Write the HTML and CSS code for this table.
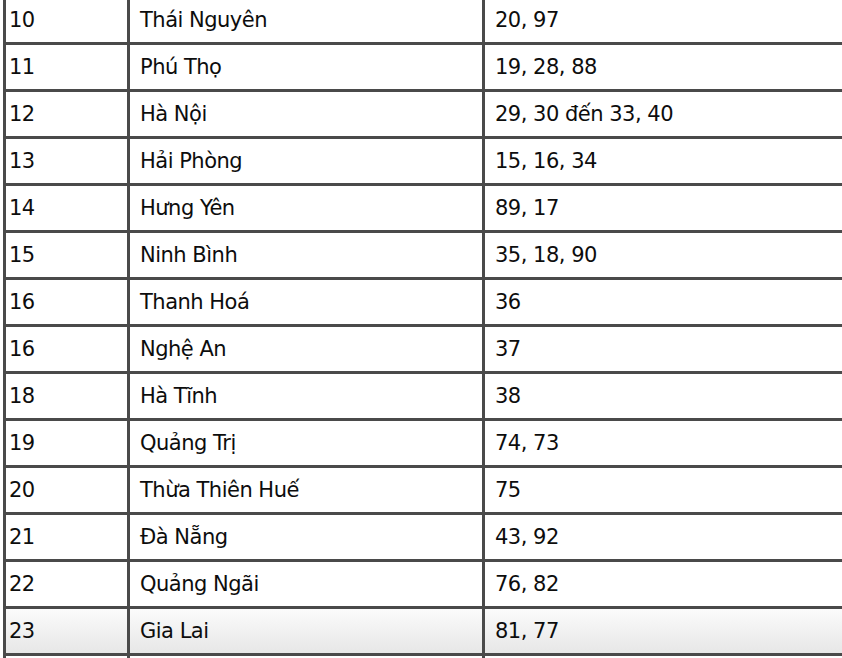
FILE: index.html
```
<!DOCTYPE html>
<html lang="vi">
<head>
<meta charset="utf-8">
<link rel="stylesheet" href="styles.css">
</head>
<body>
<div class="wrap">
<table class="plates">
<tbody>
<tr><td class="c1">10</td><td class="c2">Thái Nguyên</td><td class="c3">20, 97</td></tr>
<tr><td class="c1">11</td><td class="c2">Phú Thọ</td><td class="c3">19, 28, 88</td></tr>
<tr><td class="c1">12</td><td class="c2">Hà Nội</td><td class="c3">29, 30 đến 33, 40</td></tr>
<tr><td class="c1">13</td><td class="c2">Hải Phòng</td><td class="c3">15, 16, 34</td></tr>
<tr><td class="c1">14</td><td class="c2">Hưng Yên</td><td class="c3">89, 17</td></tr>
<tr><td class="c1">15</td><td class="c2">Ninh Bình</td><td class="c3">35, 18, 90</td></tr>
<tr><td class="c1">16</td><td class="c2">Thanh Hoá</td><td class="c3">36</td></tr>
<tr><td class="c1">16</td><td class="c2">Nghệ An</td><td class="c3">37</td></tr>
<tr><td class="c1">18</td><td class="c2">Hà Tĩnh</td><td class="c3">38</td></tr>
<tr><td class="c1">19</td><td class="c2">Quảng Trị</td><td class="c3">74, 73</td></tr>
<tr><td class="c1">20</td><td class="c2">Thừa Thiên Huế</td><td class="c3">75</td></tr>
<tr><td class="c1">21</td><td class="c2">Đà Nẵng</td><td class="c3">43, 92</td></tr>
<tr><td class="c1">22</td><td class="c2">Quảng Ngãi</td><td class="c3">76, 82</td></tr>
<tr class="hl"><td class="c1">23</td><td class="c2">Gia Lai</td><td class="c3">81, 77</td></tr>
<tr><td class="c1"></td><td class="c2"></td><td class="c3"></td></tr>
</tbody>
</table>
</div>
</body>
</html>
```
FILE: styles.css
```
html, body {
  margin: 0;
  padding: 0;
  background: #ffffff;
  overflow: hidden;
}
.wrap {
  width: 842px;
  height: 658px;
  overflow: hidden;
}
.plates {
  border-collapse: separate;
  border-spacing: 0;
  margin: -5px 0 0 3px;
  border-left: 3px solid #4a4a4a;
  border-top: 3px solid #4a4a4a;
  width: 900px;
  font-family: "DejaVu Sans", Verdana, sans-serif;
  font-size: 21px;
  letter-spacing: -0.5px;
  color: #0d0d0d;
  table-layout: fixed;
}
.plates td {
  height: 44px;
  box-sizing: content-box;
  padding-top: 0;
  padding-bottom: 0;
  border-right: 3px solid #4a4a4a;
  border-bottom: 3px solid #4a4a4a;
  vertical-align: middle;
  white-space: nowrap;
  line-height: 24px;
}
.c1 {
  width: 118px;
  padding-left: 3px;
  padding-right: 0;
}
.c2 {
  width: 342px;
  padding-left: 10px;
  padding-right: 0;
}
.c3 {
  padding-left: 10px;
  padding-right: 0;
}
.hl td {
  background: linear-gradient(#fbfbfb, #e7e7e7);
}
```
